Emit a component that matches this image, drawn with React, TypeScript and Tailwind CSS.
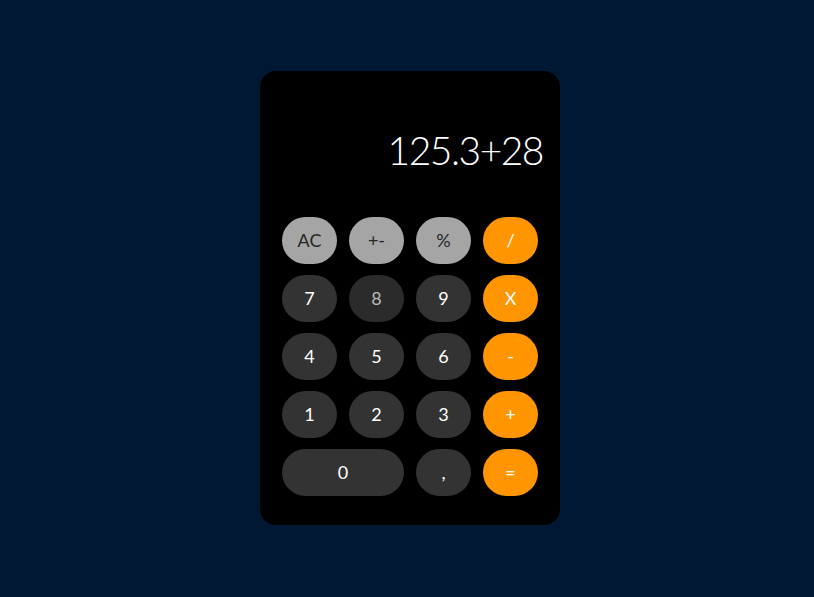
const keys: { label: string; kind: "fn" | "num" | "op" | "dim"; wide?: boolean }[] = [
  { label: "AC", kind: "fn" },
  { label: "+-", kind: "fn" },
  { label: "%", kind: "fn" },
  { label: "/", kind: "op" },
  { label: "7", kind: "num" },
  { label: "8", kind: "dim" },
  { label: "9", kind: "num" },
  { label: "X", kind: "op" },
  { label: "4", kind: "num" },
  { label: "5", kind: "num" },
  { label: "6", kind: "num" },
  { label: "-", kind: "op" },
  { label: "1", kind: "num" },
  { label: "2", kind: "num" },
  { label: "3", kind: "num" },
  { label: "+", kind: "op" },
  { label: "0", kind: "num", wide: true },
  { label: ",", kind: "num" },
  { label: "=", kind: "op" },
];

const styles = {
  fn: "bg-[#a5a5a5] text-[#262626]",
  num: "bg-[#333333] text-white",
  dim: "bg-[#2b2b2b] text-[#b8b8b8]",
  op: "bg-[#ff9500] text-white",
};

export default function App() {
  return (
    <div
      className="w-full h-[597px] bg-[#001833] flex items-start justify-center pt-[71px] pl-[6px]"
      style={{ fontFamily: "Lato, 'Noto Sans', sans-serif" }}
    >
      <div className="w-[300px] h-[454px] bg-black rounded-[16px] px-[22px] flex flex-col">
        <div className="h-[146px] flex items-center justify-end pt-[12px] -mr-[5px]">
          <span className="text-white text-[39px] font-light leading-none tracking-[-1.5px]">
            125.3+28
          </span>
        </div>
        <div className="grid grid-cols-4 gap-x-[12px] gap-y-[11px]">
          {keys.map((k) => (
            <button
              key={k.label}
              className={`h-[47px] rounded-full flex items-center justify-center text-[18px] font-normal ${styles[k.kind]} ${k.wide ? "col-span-2" : ""}`}
            >
              {k.label}
            </button>
          ))}
        </div>
      </div>
    </div>
  );
}
